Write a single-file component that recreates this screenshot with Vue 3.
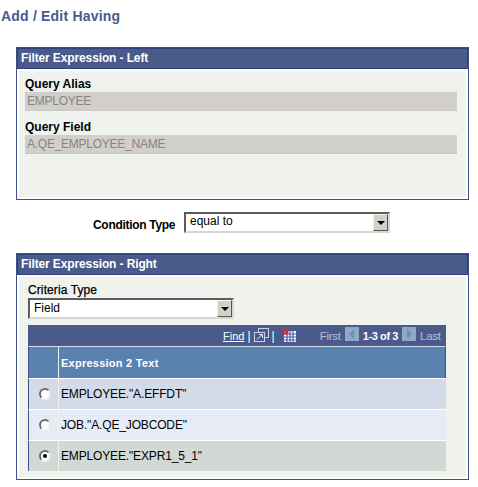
<script setup>
const rows = [
  { id: 1, text: 'EMPLOYEE."A.EFFDT"', checked: false },
  { id: 2, text: 'JOB."A.QE_JOBCODE"', checked: false },
  { id: 3, text: 'EMPLOYEE."EXPR1_5_1"', checked: true }
]
</script>

<template>
  <div class="page">
    <h1 class="title">Add / Edit Having</h1>

    <section class="panel panel-left">
      <div class="panel-head">Filter Expression - Left</div>
      <div class="panel-body left-body">
        <label class="lbl">Query Alias</label>
        <div class="readonly">EMPLOYEE</div>
        <label class="lbl second">Query Field</label>
        <div class="readonly">A.QE_EMPLOYEE_NAME</div>
      </div>
    </section>

    <div class="condition">
      <span class="lbl">Condition Type</span>
      <div class="select wide">
        <span class="select-text">equal to</span>
        <span class="select-btn"><i class="arrow"></i></span>
      </div>
    </div>

    <section class="panel">
      <div class="panel-head">Filter Expression - Right</div>
      <div class="panel-body right-body">
        <div class="criteria-label">Criteria Type</div>
        <div class="select narrow">
          <span class="select-text">Field</span>
          <span class="select-btn"><i class="arrow"></i></span>
        </div>

        <div class="grid">
          <div class="toolbar">
            <a class="find">Find</a>
            <span class="sep">|</span>
            <svg class="tool-icon" width="15" height="14" viewBox="0 0 15 14">
              <rect x="4.5" y="0.5" width="10" height="9" fill="none" stroke="#c9d3ea" />
              <rect x="0.5" y="4.5" width="10" height="9" fill="#4a5a8a" stroke="#c9d3ea" />
              <path d="M3 11.5L8 6.5M5 6.5h3.5v3.5" fill="none" stroke="#e6ebf7" />
            </svg>
            <span class="sep sep-b">|</span>
            <svg class="grid-icon" width="15" height="14" viewBox="0 0 15 14">
              <rect x="3" y="3" width="12" height="11" fill="#ffffff" />
              <path d="M6 3v11M9 3v11M12 3v11M3 6h12M3 9h12M3 12h12" stroke="#4a5cab" stroke-width="1.2" />
              <path d="M0 0l6 5M3 5.5H6.5V2" fill="none" stroke="#e8262c" stroke-width="1.8" />
            </svg>
            <span class="nav-off first">First</span>
            <span class="nav-btn"><i class="tri tri-left"></i></span>
            <span class="count">1-3 of 3</span>
            <span class="nav-btn"><i class="tri tri-right"></i></span>
            <span class="nav-off">Last</span>
          </div>
          <div class="grid-head">
            <div class="cell-radio"></div>
            <div class="cell-text">Expression 2 Text</div>
          </div>
          <div v-for="row in rows" :key="row.id" class="grid-row" :class="'row-' + row.id">
            <div class="cell-radio">
              <span class="radio"><i v-if="row.checked" class="dot"></i></span>
            </div>
            <div class="cell-text">{{ row.text }}</div>
          </div>
        </div>
      </div>
    </section>
  </div>
</template>

<style>
html,
body {
  margin: 0;
  background: #ffffff;
}
</style>

<style scoped>
.page {
  width: 478px;
  height: 487px;
  box-sizing: border-box;
  padding-top: 8px;
  overflow: hidden;
  font-family: "Liberation Sans", Arial, sans-serif;
  font-size: 12px;
  color: #000000;
}

.title {
  margin: 0 0 23px 1px;
  font-size: 14px;
  line-height: 16px;
  font-weight: bold;
  letter-spacing: 0.2px;
  color: #4a5a8c;
}

.panel {
  width: 453px;
  margin-left: 16px;
  box-sizing: border-box;
  border: 1px solid #3f5088;
  background: #ffffff;
}

.panel-head {
  height: 21px;
  box-sizing: border-box;
  padding-left: 3px;
  background: #4a5a8a;
  border: 1px solid #2f4279;
  color: #ffffff;
  font-size: 12px;
  font-weight: bold;
  letter-spacing: -0.12px;
  line-height: 19px;
}

.panel-body {
  margin: 2px;
  background: #f0f2ee;
}

.left-body {
  height: 126px;
  box-sizing: border-box;
  padding: 6px 9px 0 6px;
}

.right-body {
  height: 200px;
  box-sizing: border-box;
  padding: 6px 0 0 9px;
}

.lbl {
  display: block;
  font-weight: bold;
  font-size: 12px;
  line-height: 15px;
}

.second {
  margin-top: 9px;
}

.readonly {
  height: 19px;
  box-sizing: border-box;
  padding-left: 2px;
  background: #d2cec8;
  border-bottom: 1px solid #c8c8c4;
  color: #858585;
  line-height: 18px;
  letter-spacing: -0.25px;
}

.condition {
  display: flex;
  align-items: flex-start;
  height: 53px;
  padding: 12px 0 0 93px;
  box-sizing: border-box;
}

.condition .lbl {
  width: 91px;
  padding-top: 6px;
  letter-spacing: -0.3px;
}

.select {
  display: flex;
  box-sizing: border-box;
  height: 21px;
  background: #ffffff;
  border: 2px solid;
  border-color: #5c5c5c #d8d6d0 #d8d6d0 #5c5c5c;
}

.wide {
  width: 206px;
}

.narrow {
  width: 206px;
}

.select-text {
  flex: 1;
  padding-left: 4px;
  line-height: 15px;
}

.narrow .select-text {
  line-height: 17px;
}

.select-btn {
  display: flex;
  align-items: center;
  justify-content: center;
  width: 15px;
  box-sizing: border-box;
  background: #d4d0c8;
  border: 1px solid;
  border-color: #f4f2ee #555555 #555555 #f4f2ee;
}

.arrow {
  width: 0;
  height: 0;
  border-left: 4px solid transparent;
  border-right: 4px solid transparent;
  border-top: 4px solid #000000;
}

.criteria-label {
  font-size: 12px;
  line-height: 15px;
  letter-spacing: 0.1px;
  -webkit-text-stroke: 0.25px #000000;
}

.grid {
  width: 418px;
  margin-top: 6px;
}

.toolbar {
  display: flex;
  align-items: center;
  height: 21px;
  box-sizing: border-box;
  padding-left: 195px;
  background: #4a5a8a;
  color: #ffffff;
  font-size: 11px;
  white-space: nowrap;
}

.find {
  text-decoration: underline;
}

.sep {
  margin-left: 3px;
  font-size: 12px;
}

.tool-icon {
  flex: none;
  margin: 0 0 2px 3px;
}

.sep-b {
  margin-left: 3px;
}

.grid-icon {
  flex: none;
  margin: 0 0 2px 6px;
}

.nav-off {
  color: #b6c0d8;
  font-size: 11.5px;
  letter-spacing: -0.25px;
}

.first {
  margin-left: 24px;
}

.nav-btn {
  display: flex;
  align-items: center;
  justify-content: center;
  flex: none;
  width: 14px;
  height: 14px;
  margin: 0 4px 3px 4px;
  background: #8fa9c8;
}

.tri {
  width: 0;
  height: 0;
  border-top: 5px solid transparent;
  border-bottom: 5px solid transparent;
}

.tri-left {
  border-right: 5px solid #6f8db5;
}

.tri-right {
  border-left: 5px solid #6f8db5;
}

.count {
  font-size: 11px;
  font-weight: bold;
  letter-spacing: -0.4px;
}

.grid-head {
  display: flex;
  height: 32px;
  background: #5a82b0;
  border-top: 1px solid #d6deec;
  border-left: 1px solid #3f5088;
  border-right: 1px solid #3f5088;
  box-sizing: border-box;
  color: #ffffff;
  font-weight: bold;
  font-size: 11px;
  letter-spacing: 0.25px;
}

.cell-radio {
  width: 30px;
  flex: none;
  box-sizing: border-box;
  padding-left: 3px;
  display: flex;
  align-items: center;
  justify-content: center;
  border-right: 1px solid #f0f2ee;
}

.cell-text {
  flex: 1;
  padding-left: 2px;
  display: flex;
  align-items: center;
}

.grid-row {
  display: flex;
  height: 31px;
  box-sizing: border-box;
  border-left: 1px solid #3f5088;
  border-top: 1px solid #ffffff;
  font-size: 12px;
  letter-spacing: -0.15px;
  color: #000000;
}

.grid-row .cell-radio {
  padding-bottom: 1px;
}

.grid-row .cell-text {
  padding-bottom: 1px;
}

.row-1 {
  background: #d3dae8;
}

.row-2 {
  background: #e6ebf5;
}

.row-3 {
  background: #d2d8d4;
}

.radio {
  display: flex;
  align-items: center;
  justify-content: center;
  width: 12px;
  height: 12px;
  box-sizing: border-box;
  border-radius: 50%;
  background: #ffffff;
  border: 2px solid;
  border-color: #6e6e6e #e8e8e8 #f4f4f4 #6e6e6e;
}

.dot {
  width: 4px;
  height: 4px;
  border-radius: 50%;
  background: #000000;
}
</style>
